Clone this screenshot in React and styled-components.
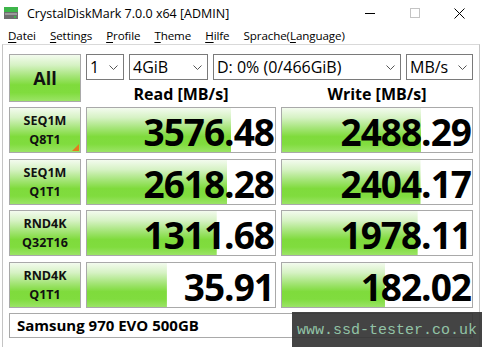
import React from "react";
import styled, { createGlobalStyle } from "styled-components";

const GlobalStyle = createGlobalStyle`
  html, body {
    margin: 0;
    padding: 0;
    background: #ffffff;
  }
  body {
    font-family: "Open Sans", "Noto Sans", "DejaVu Sans", sans-serif;
    color: #000;
  }
`;

const Window = styled.div`
  width: 482px;
  height: 347px;
  overflow: hidden;
  position: relative;
  background: #ffffff;
  display: flex;
  flex-direction: column;
`;

const TitleBar = styled.div`
  height: 26px;
  display: flex;
  align-items: center;
  padding-left: 4px;
  font-size: 12.5px;
`;

const TitleText = styled.span`
  margin-left: 9px;
  flex: 1;
`;

const WinButtons = styled.div`
  display: flex;
  height: 100%;
`;

const WinButton = styled.div`
  width: 45px;
  display: flex;
  align-items: center;
  justify-content: center;
`;

const MenuBar = styled.div`
  height: 18px;
  display: flex;
  align-items: center;
  padding-left: 1px;
  font-size: 11.6px;
  letter-spacing: -0.1px;
`;

const MenuItem = styled.span`
  padding: 0 7px;
  u {
    text-decoration: underline;
    text-underline-offset: 2px;
  }
`;

const Body = styled.div`
  flex: 1;
  margin: 0 2px;
  border-top: 1px solid #d9d9d9;
  border-left: 1px solid #c4c4c4;
  border-right: 1px solid #c4c4c4;
  padding: 9px 6px 0 6px;
  display: flex;
  flex-direction: column;
`;

const Top = styled.div`
  display: grid;
  grid-template-columns: 72px 1fr;
  column-gap: 5px;
`;

const greenGradient = `linear-gradient(to bottom, #f3fbee 0%, #d6f2c4 22%, #a6e57a 45%, #7fdb3c 65%, #80dc3e 82%, #9be466 100%)`;

const GreenButton = styled.div`
  position: relative;
  height: ${({ $h }) => $h}px;
  box-sizing: border-box;
  border: 1px solid #a9a9a9;
  background: ${greenGradient};
  display: flex;
  flex-direction: column;
  align-items: center;
  justify-content: center;
  font-weight: 700;
  font-size: ${({ $size }) => $size}px;
  line-height: ${({ $lh }) => $lh || "normal"};
  color: #111;
`;

const Corner = styled.span`
  position: absolute;
  right: 1px;
  bottom: 1px;
  width: 0;
  height: 0;
  border-left: 7px solid transparent;
  border-bottom: 7px solid #e57a1e;
`;

const Controls = styled.div`
  display: flex;
  flex-direction: column;
`;

const DropRow = styled.div`
  display: flex;
  gap: 5px;
  height: 26px;
`;

const Select = styled.div`
  width: ${({ $w }) => $w}px;
  box-sizing: border-box;
  border: 1px solid #7a7a7a;
  background: #fff;
  display: flex;
  align-items: center;
  justify-content: space-between;
  padding: 0 5px 0 3px;
  font-size: 16px;
`;

const HeaderRow = styled.div`
  display: grid;
  grid-template-columns: 190px 192px;
  column-gap: 5px;
  height: 22px;
`;

const Header = styled.div`
  display: flex;
  align-items: center;
  justify-content: center;
  font-weight: 700;
  font-size: 16px;
  padding-top: 3px;
`;

const Results = styled.div`
  margin-top: 5px;
  display: grid;
  grid-template-columns: 72px 190px 192px;
  grid-auto-rows: 46px;
  column-gap: 5px;
  row-gap: 5.67px;
`;

const Cell = styled.div`
  box-sizing: border-box;
  border: 1px solid #a9a9a9;
  background-color: #fff;
  background-image: ${greenGradient};
  background-repeat: no-repeat;
  display: flex;
  align-items: center;
  justify-content: flex-end;
  padding: 3px 1px 0 0;
  font-family: "Open Sans", "Noto Sans", sans-serif;
  font-weight: 700;
  font-size: 37px;
  letter-spacing: -1px;
  color: #000;
`;

const DriveBox = styled.div`
  margin-top: 5px;
  height: 25px;
  box-sizing: border-box;
  border: 1px solid #a9a9a9;
  display: flex;
  align-items: center;
  padding-left: 7px;
  font-weight: 700;
  font-size: 15px;
`;

const Watermark = styled.div`
  position: absolute;
  left: 292px;
  top: 312px;
  width: 190px;
  height: 35px;
  background: rgba(52, 52, 52, 0.92);
  display: flex;
  align-items: center;
  padding-left: 5px;
  box-sizing: border-box;
  font-family: "Liberation Mono", "DejaVu Sans Mono", monospace;
  font-size: 15px;
  color: #92c3a6;
  padding-top: 2px;
`;

const Chevron = () => (
  <svg width="9" height="5" viewBox="0 0 9 5">
    <polyline points="0.5,0.5 4.5,4.5 8.5,0.5" fill="none" stroke="#555" strokeWidth="1" />
  </svg>
);

const AppIcon = () => (
  <svg width="14" height="13" viewBox="0 0 14 13">
    <rect x="0" y="0" width="14" height="5" fill="#3db54a" />
    <rect x="0" y="5" width="14" height="7" fill="#6d6d6d" />
    <rect x="1" y="6" width="12" height="2" fill="#9a9a9a" />
    <rect x="10" y="9" width="2" height="2" fill="#3db54a" />
  </svg>
);

const tests = [
  { l1: "SEQ1M", l2: "Q8T1", read: "3576.48", rp: 76.8, write: "2488.29", wp: 73.2, mark: true },
  { l1: "SEQ1M", l2: "Q1T1", read: "2618.28", rp: 74.7, write: "2404.17", wp: 72.9 },
  { l1: "RND4K", l2: "Q32T16", read: "1311.68", rp: 69.0, write: "1978.11", wp: 71.4 },
  { l1: "RND4K", l2: "Q1T1", read: "35.91", rp: 42.5, write: "182.02", wp: 54.2 },
];

const menus = [
  ["D", "atei"],
  ["S", "ettings"],
  ["P", "rofile"],
  ["T", "heme"],
  ["H", "ilfe"],
];

export default function App() {
  return (
    <Window>
      <GlobalStyle />
      <TitleBar>
        <AppIcon />
        <TitleText>CrystalDiskMark 7.0.0 x64 [ADMIN]</TitleText>
        <WinButtons>
          <WinButton>
            <svg width="10" height="10" viewBox="0 0 10 10">
              <line x1="0" y1="5.5" x2="10" y2="5.5" stroke="#000" strokeWidth="1" />
            </svg>
          </WinButton>
          <WinButton>
            <svg width="10" height="10" viewBox="0 0 10 10">
              <rect x="0.5" y="0.5" width="9" height="9" fill="none" stroke="#c4c4c4" strokeWidth="1" />
            </svg>
          </WinButton>
          <WinButton>
            <svg width="11" height="11" viewBox="0 0 11 11">
              <line x1="0.5" y1="0.5" x2="10.5" y2="10.5" stroke="#000" strokeWidth="1" />
              <line x1="10.5" y1="0.5" x2="0.5" y2="10.5" stroke="#000" strokeWidth="1" />
            </svg>
          </WinButton>
        </WinButtons>
      </TitleBar>
      <MenuBar>
        {menus.map(([u, rest]) => (
          <MenuItem key={u + rest}>
            <u>{u}</u>
            {rest}
          </MenuItem>
        ))}
        <MenuItem>
          Sprache(<u>L</u>anguage)
        </MenuItem>
      </MenuBar>
      <Body>
        <Top>
          <GreenButton $h={48} $size={18}>
            All
          </GreenButton>
          <Controls>
            <DropRow>
              <Select $w={38}>
                <span>1</span>
                <Chevron />
              </Select>
              <Select $w={79}>
                <span>4GiB</span>
                <Chevron />
              </Select>
              <Select $w={188}>
                <span>D: 0% (0/466GiB)</span>
                <Chevron />
              </Select>
              <Select $w={67}>
                <span>MB/s</span>
                <Chevron />
              </Select>
            </DropRow>
            <HeaderRow>
              <Header>Read [MB/s]</Header>
              <Header>Write [MB/s]</Header>
            </HeaderRow>
          </Controls>
        </Top>
        <Results>
          {tests.map((t) => (
            <React.Fragment key={t.l1 + t.l2}>
              <GreenButton $h={46} $size={12.5} $lh="19px">
                <span>{t.l1}</span>
                <span>{t.l2}</span>
                {t.mark && <Corner />}
              </GreenButton>
              <Cell style={{ backgroundSize: `${t.rp}% 100%` }}>{t.read}</Cell>
              <Cell style={{ backgroundSize: `${t.wp}% 100%` }}>{t.write}</Cell>
            </React.Fragment>
          ))}
        </Results>
        <DriveBox>Samsung 970 EVO 500GB</DriveBox>
      </Body>
      <Watermark>www.ssd-tester.co.uk</Watermark>
    </Window>
  );
}
